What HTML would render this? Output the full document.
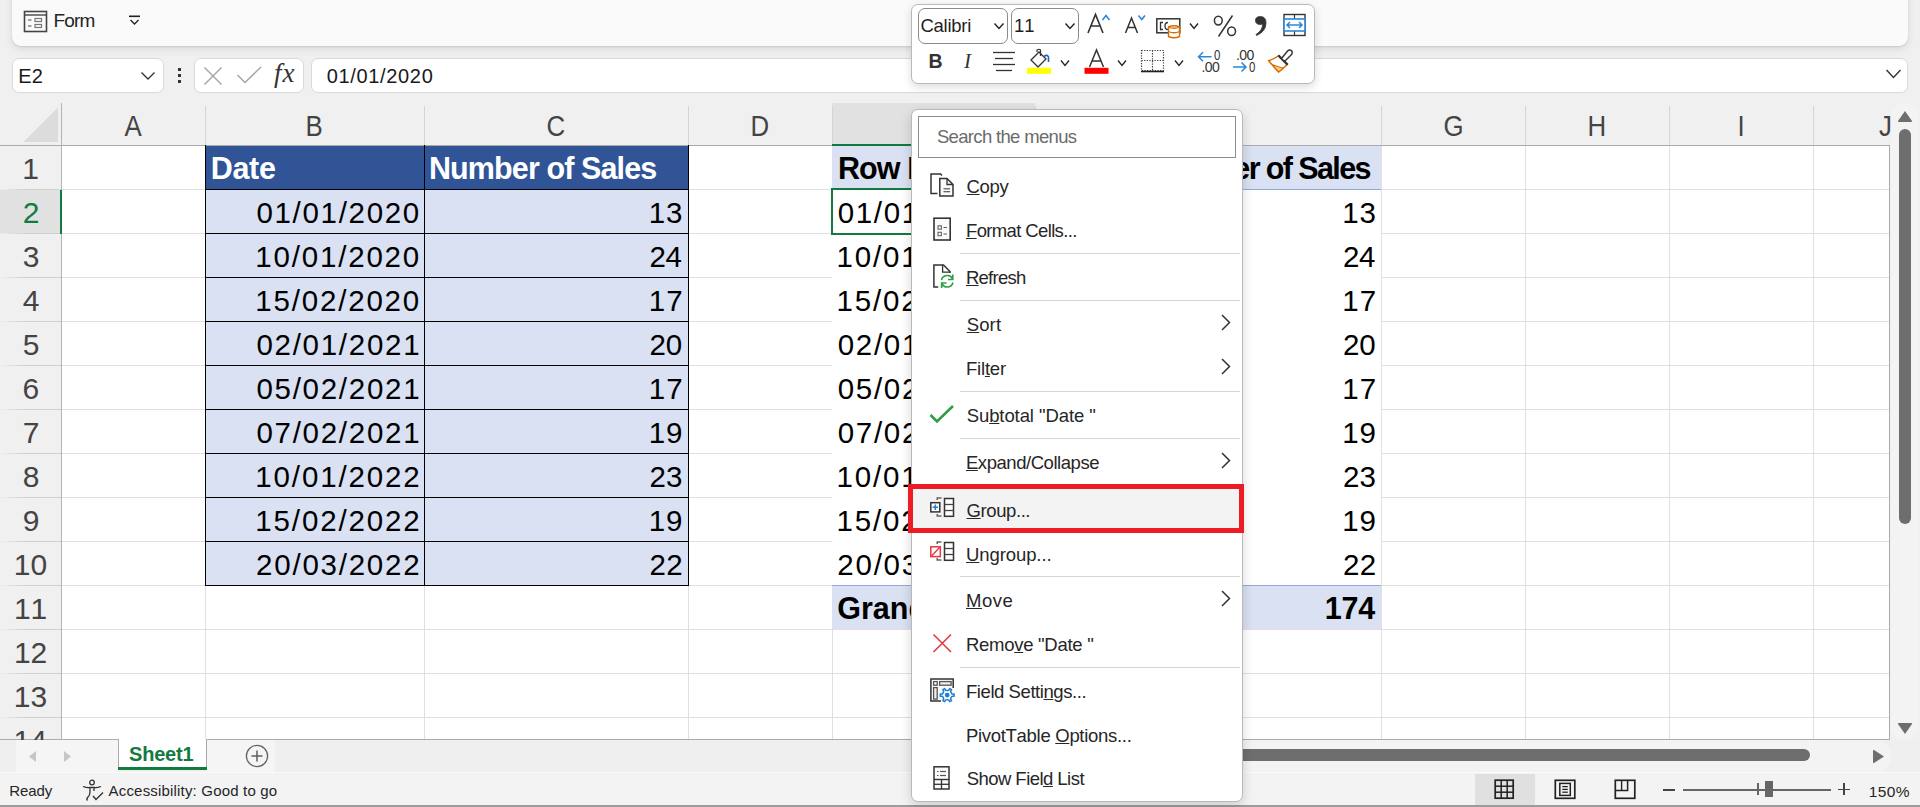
<!DOCTYPE html><html><head><meta charset='utf-8'><style>
html,body{margin:0;padding:0;}
body{width:1920px;height:807px;overflow:hidden;position:relative;background:#f0f0f0;font-family:"Liberation Sans",sans-serif;font-kerning:none;}
.a{position:absolute;}
.t{position:absolute;white-space:pre;font-family:"Liberation Sans",sans-serif;}
svg.a{overflow:visible;}
</style></head><body>
<div class=a style='left:12px;top:-20px;width:1896px;height:66px;background:#fafafa;border-radius:9px;box-shadow:0 1px 2px rgba(0,0,0,0.10),0 3px 8px rgba(0,0,0,0.09);'></div>
<svg class=a style='left:23px;top:10px' width=26 height=24 viewBox='0 0 26 24'>
<rect x='1.5' y='1.5' width='22' height='20' fill='none' stroke='#444' stroke-width='1.6'/>
<line x1='1.5' y1='5' x2='23.5' y2='5' stroke='#444' stroke-width='1.4'/>
<line x1='5' y1='10' x2='8.5' y2='10' stroke='#666' stroke-width='1.2'/>
<line x1='5' y1='16' x2='8.5' y2='16' stroke='#666' stroke-width='1.2'/>
<rect x='12' y='8.5' width='6.5' height='3' fill='none' stroke='#777' stroke-width='1.2'/>
<rect x='12' y='14.5' width='6.5' height='3' fill='none' stroke='#777' stroke-width='1.2'/>
</svg>
<div class=t style='left:53.44px;top:10.91px;font-size:19px;line-height:19px;color:#242424;letter-spacing:-0.839px;'>Form</div>
<svg class=a style='left:128px;top:15px' width=13 height=11 viewBox='0 0 13 11'>
<line x1='1' y1='1.3' x2='12' y2='1.3' stroke='#222' stroke-width='1.6'/>
<polyline points='2.5,5 6.5,9 10.5,5' fill='none' stroke='#222' stroke-width='1.3'/>
</svg>
<div class=a style='left:12px;top:58px;width:152px;height:35px;background:#fff;border:1px solid #d9d9d9;border-radius:7px;box-sizing:border-box;'></div>
<div class=t style='left:18.36px;top:66.07px;font-size:20px;line-height:20px;color:#1a1a1a;'>E2</div>
<svg class=a style='left:140px;top:70px' width=16 height=12 viewBox='0 0 16 12'>
<polyline points='1.5,2.5 8,9 14.5,2.5' fill='none' stroke='#333' stroke-width='1.4'/></svg>
<div class=a style='left:178px;top:68px;width:3px;height:3px;background:#333;'></div>
<div class=a style='left:178px;top:74px;width:3px;height:3px;background:#333;'></div>
<div class=a style='left:178px;top:80px;width:3px;height:3px;background:#333;'></div>
<div class=a style='left:194px;top:58px;width:110px;height:35px;background:#fff;border:1px solid #d9d9d9;border-radius:7px;box-sizing:border-box;'></div>
<svg class=a style='left:203px;top:66px' width=22 height=20 viewBox='0 0 22 20'>
<line x1='1.5' y1='1.5' x2='18.5' y2='18.5' stroke='#a6a6a6' stroke-width='1.5'/>
<line x1='18.5' y1='1.5' x2='1.5' y2='18.5' stroke='#a6a6a6' stroke-width='1.5'/></svg>
<svg class=a style='left:236px;top:65px' width=27 height=20 viewBox='0 0 27 20'>
<polyline points='1.5,10 9,17.5 25,2' fill='none' stroke='#a6a6a6' stroke-width='1.5'/></svg>
<div class=t style='left:274px;top:60px;font-size:27px;line-height:27px;color:#333;font-style:italic;font-family:"Liberation Serif",serif;letter-spacing:1px'>fx</div>
<div class=a style='left:311px;top:58px;width:1597px;height:35px;background:#fff;border:1px solid #d9d9d9;border-radius:7px;box-sizing:border-box;'></div>
<div class=t style='left:326.72px;top:65.87px;font-size:20px;line-height:20px;color:#1a1a1a;letter-spacing:0.663px;'>01/01/2020</div>
<svg class=a style='left:1885px;top:68px' width=17 height=12 viewBox='0 0 17 12'>
<polyline points='1.5,2 8.5,9.5 15.5,2' fill='none' stroke='#333' stroke-width='1.4'/></svg>
<div class=a style='left:832px;top:103px;width:203px;height:42px;background:#e1e1e1;'></div>
<div class=a style='left:205px;top:106px;width:1px;height:39px;background:#d5d5d5;'></div>
<div class=a style='left:424px;top:106px;width:1px;height:39px;background:#d5d5d5;'></div>
<div class=a style='left:688px;top:106px;width:1px;height:39px;background:#d5d5d5;'></div>
<div class=a style='left:832px;top:106px;width:1px;height:39px;background:#d5d5d5;'></div>
<div class=a style='left:1035px;top:106px;width:1px;height:39px;background:#d5d5d5;'></div>
<div class=a style='left:1381px;top:106px;width:1px;height:39px;background:#d5d5d5;'></div>
<div class=a style='left:1525px;top:106px;width:1px;height:39px;background:#d5d5d5;'></div>
<div class=a style='left:1669px;top:106px;width:1px;height:39px;background:#d5d5d5;'></div>
<div class=a style='left:1813px;top:106px;width:1px;height:39px;background:#d5d5d5;'></div>
<div class=a style='left:0px;top:145px;width:1889px;height:1px;background:#ababab;'></div>
<div class=a style='left:832px;top:144px;width:203px;height:2px;background:#137a3f;'></div>
<svg class=a style='left:23px;top:107px' width=36 height=36 viewBox='0 0 36 36'><polygon points='35,0.5 35,35 0.5,35' fill='#dcdcdc'/></svg>
<div class=t style='left:123.00px;top:110.60px;font-size:30px;line-height:30px;color:#444444;transform:scaleX(0.86);transform-origin:10.00px 0;'>A</div>
<div class=t style='left:304.06px;top:110.60px;font-size:30px;line-height:30px;color:#444444;transform:scaleX(0.86);transform-origin:10.44px 0;'>B</div>
<div class=t style='left:544.98px;top:110.60px;font-size:30px;line-height:30px;color:#444444;transform:scaleX(0.86);transform-origin:11.02px 0;'>C</div>
<div class=t style='left:748.65px;top:110.60px;font-size:30px;line-height:30px;color:#444444;transform:scaleX(0.86);transform-origin:11.35px 0;'>D</div>
<div class=t style='left:922.91px;top:110.60px;font-size:30px;line-height:30px;color:#444444;transform:scaleX(0.86);transform-origin:10.59px 0;'>E</div>
<div class=t style='left:1198.21px;top:110.60px;font-size:30px;line-height:30px;color:#444444;transform:scaleX(0.86);transform-origin:9.79px 0;'>F</div>
<div class=t style='left:1441.70px;top:110.60px;font-size:30px;line-height:30px;color:#444444;transform:scaleX(0.86);transform-origin:11.30px 0;'>G</div>
<div class=t style='left:1586.16px;top:110.60px;font-size:30px;line-height:30px;color:#444444;transform:scaleX(0.86);transform-origin:10.84px 0;'>H</div>
<div class=t style='left:1736.83px;top:110.60px;font-size:30px;line-height:30px;color:#444444;transform:scaleX(0.86);transform-origin:4.17px 0;'>I</div>
<div class=t style='left:1877.88px;top:110.60px;font-size:30px;line-height:30px;color:#444444;transform:scaleX(0.86);transform-origin:6.62px 0;'>J</div>
<div class=a style='left:62px;top:146px;width:1827px;height:593px;background:#fff;'></div>
<div class=a style='left:205px;top:146px;width:1px;height:593px;background:#e0e0e0;'></div>
<div class=a style='left:424px;top:146px;width:1px;height:593px;background:#e0e0e0;'></div>
<div class=a style='left:688px;top:146px;width:1px;height:593px;background:#e0e0e0;'></div>
<div class=a style='left:832px;top:146px;width:1px;height:593px;background:#e0e0e0;'></div>
<div class=a style='left:1035px;top:146px;width:1px;height:593px;background:#e0e0e0;'></div>
<div class=a style='left:1381px;top:146px;width:1px;height:593px;background:#e0e0e0;'></div>
<div class=a style='left:1525px;top:146px;width:1px;height:593px;background:#e0e0e0;'></div>
<div class=a style='left:1669px;top:146px;width:1px;height:593px;background:#e0e0e0;'></div>
<div class=a style='left:1813px;top:146px;width:1px;height:593px;background:#e0e0e0;'></div>
<div class=a style='left:62px;top:189px;width:1827px;height:1px;background:#e0e0e0;'></div>
<div class=a style='left:62px;top:233px;width:1827px;height:1px;background:#e0e0e0;'></div>
<div class=a style='left:62px;top:277px;width:1827px;height:1px;background:#e0e0e0;'></div>
<div class=a style='left:62px;top:321px;width:1827px;height:1px;background:#e0e0e0;'></div>
<div class=a style='left:62px;top:365px;width:1827px;height:1px;background:#e0e0e0;'></div>
<div class=a style='left:62px;top:409px;width:1827px;height:1px;background:#e0e0e0;'></div>
<div class=a style='left:62px;top:453px;width:1827px;height:1px;background:#e0e0e0;'></div>
<div class=a style='left:62px;top:497px;width:1827px;height:1px;background:#e0e0e0;'></div>
<div class=a style='left:62px;top:541px;width:1827px;height:1px;background:#e0e0e0;'></div>
<div class=a style='left:62px;top:585px;width:1827px;height:1px;background:#e0e0e0;'></div>
<div class=a style='left:62px;top:629px;width:1827px;height:1px;background:#e0e0e0;'></div>
<div class=a style='left:62px;top:673px;width:1827px;height:1px;background:#e0e0e0;'></div>
<div class=a style='left:62px;top:717px;width:1827px;height:1px;background:#e0e0e0;'></div>
<div class=a style='left:1889px;top:145px;width:1px;height:595px;background:#ababab;'></div>
<div class=a style='left:0px;top:739px;width:1890px;height:1px;background:#ababab;'></div>
<div class=a style='left:61px;top:103px;width:1px;height:637px;background:#b4b4b4;'></div>
<div class=a style='left:0px;top:190px;width:61px;height:43px;background:#e1e1e1;'></div>
<div class=a style='left:0;top:189px;width:61px;height:1px;background:linear-gradient(90deg,rgba(208,208,208,0),#d0d0d0 40%)'></div>
<div class=a style='left:0;top:233px;width:61px;height:1px;background:linear-gradient(90deg,rgba(208,208,208,0),#d0d0d0 40%)'></div>
<div class=a style='left:0;top:277px;width:61px;height:1px;background:linear-gradient(90deg,rgba(208,208,208,0),#d0d0d0 40%)'></div>
<div class=a style='left:0;top:321px;width:61px;height:1px;background:linear-gradient(90deg,rgba(208,208,208,0),#d0d0d0 40%)'></div>
<div class=a style='left:0;top:365px;width:61px;height:1px;background:linear-gradient(90deg,rgba(208,208,208,0),#d0d0d0 40%)'></div>
<div class=a style='left:0;top:409px;width:61px;height:1px;background:linear-gradient(90deg,rgba(208,208,208,0),#d0d0d0 40%)'></div>
<div class=a style='left:0;top:453px;width:61px;height:1px;background:linear-gradient(90deg,rgba(208,208,208,0),#d0d0d0 40%)'></div>
<div class=a style='left:0;top:497px;width:61px;height:1px;background:linear-gradient(90deg,rgba(208,208,208,0),#d0d0d0 40%)'></div>
<div class=a style='left:0;top:541px;width:61px;height:1px;background:linear-gradient(90deg,rgba(208,208,208,0),#d0d0d0 40%)'></div>
<div class=a style='left:0;top:585px;width:61px;height:1px;background:linear-gradient(90deg,rgba(208,208,208,0),#d0d0d0 40%)'></div>
<div class=a style='left:0;top:629px;width:61px;height:1px;background:linear-gradient(90deg,rgba(208,208,208,0),#d0d0d0 40%)'></div>
<div class=a style='left:0;top:673px;width:61px;height:1px;background:linear-gradient(90deg,rgba(208,208,208,0),#d0d0d0 40%)'></div>
<div class=a style='left:0;top:717px;width:61px;height:1px;background:linear-gradient(90deg,rgba(208,208,208,0),#d0d0d0 40%)'></div>
<div class=t style='left:22.25px;top:153.60px;font-size:30px;line-height:30px;color:#444444;'>1</div>
<div class=t style='left:22.66px;top:197.60px;font-size:30px;line-height:30px;color:#107c41;'>2</div>
<div class=t style='left:22.75px;top:241.60px;font-size:30px;line-height:30px;color:#444444;'>3</div>
<div class=t style='left:22.75px;top:285.60px;font-size:30px;line-height:30px;color:#444444;'>4</div>
<div class=t style='left:22.69px;top:329.60px;font-size:30px;line-height:30px;color:#444444;'>5</div>
<div class=t style='left:22.56px;top:373.60px;font-size:30px;line-height:30px;color:#444444;'>6</div>
<div class=t style='left:22.64px;top:417.60px;font-size:30px;line-height:30px;color:#444444;'>7</div>
<div class=t style='left:22.66px;top:461.60px;font-size:30px;line-height:30px;color:#444444;'>8</div>
<div class=t style='left:22.67px;top:505.60px;font-size:30px;line-height:30px;color:#444444;'>9</div>
<div class=t style='left:13.76px;top:549.60px;font-size:30px;line-height:30px;color:#444444;'>10</div>
<div class=t style='left:13.91px;top:593.60px;font-size:30px;line-height:30px;color:#444444;'>11</div>
<div class=t style='left:13.93px;top:637.60px;font-size:30px;line-height:30px;color:#444444;'>12</div>
<div class=t style='left:13.83px;top:681.60px;font-size:30px;line-height:30px;color:#444444;'>13</div>
<div class=t style='left:13.61px;top:725.60px;font-size:30px;line-height:30px;color:#444444;'>14</div>
<div class=a style='left:60px;top:190px;width:2px;height:44px;background:#137a3f;'></div>
<div class=a style='left:0px;top:740px;width:1920px;height:67px;background:#f0f0f0;'></div>
<div class=a style='left:205px;top:146px;width:483px;height:43px;background:#305496;'></div>
<div class=a style='left:205px;top:189px;width:483px;height:396px;background:#d9e1f2;'></div>
<div class=a style='left:205px;top:145px;width:1px;height:441px;background:#000;'></div>
<div class=a style='left:424px;top:145px;width:1px;height:441px;background:#000;'></div>
<div class=a style='left:688px;top:145px;width:1px;height:441px;background:#000;'></div>
<div class=a style='left:205px;top:189px;width:484px;height:1px;background:#000;'></div>
<div class=a style='left:205px;top:233px;width:484px;height:1px;background:#000;'></div>
<div class=a style='left:205px;top:277px;width:484px;height:1px;background:#000;'></div>
<div class=a style='left:205px;top:321px;width:484px;height:1px;background:#000;'></div>
<div class=a style='left:205px;top:365px;width:484px;height:1px;background:#000;'></div>
<div class=a style='left:205px;top:409px;width:484px;height:1px;background:#000;'></div>
<div class=a style='left:205px;top:453px;width:484px;height:1px;background:#000;'></div>
<div class=a style='left:205px;top:497px;width:484px;height:1px;background:#000;'></div>
<div class=a style='left:205px;top:541px;width:484px;height:1px;background:#000;'></div>
<div class=a style='left:205px;top:585px;width:484px;height:1px;background:#000;'></div>
<div class=t style='left:210.76px;top:153.18px;font-size:30.5px;line-height:30.5px;color:#fff;font-weight:700;letter-spacing:-0.308px;'>Date</div>
<div class=t style='left:428.96px;top:153.18px;font-size:30.5px;line-height:30.5px;color:#fff;font-weight:700;letter-spacing:-0.885px;'>Number of Sales</div>
<div class=t style='left:256.45px;top:198.02px;font-size:29.5px;line-height:29.5px;color:#000;letter-spacing:1.685px;'>01/01/2020</div>
<div class=t style='left:648.75px;top:198.02px;font-size:29.5px;line-height:29.5px;color:#000;letter-spacing:0.830px;'>13</div>
<div class=t style='left:255.35px;top:242.02px;font-size:29.5px;line-height:29.5px;color:#000;letter-spacing:1.806px;'>10/01/2020</div>
<div class=t style='left:649.52px;top:242.02px;font-size:29.5px;line-height:29.5px;color:#000;letter-spacing:-0.365px;'>24</div>
<div class=t style='left:255.35px;top:286.02px;font-size:29.5px;line-height:29.5px;color:#000;letter-spacing:1.806px;'>15/02/2020</div>
<div class=t style='left:648.75px;top:286.02px;font-size:29.5px;line-height:29.5px;color:#000;letter-spacing:1.018px;'>17</div>
<div class=t style='left:256.45px;top:330.02px;font-size:29.5px;line-height:29.5px;color:#000;letter-spacing:1.717px;'>02/01/2021</div>
<div class=t style='left:649.52px;top:330.02px;font-size:29.5px;line-height:29.5px;color:#000;letter-spacing:-0.077px;'>20</div>
<div class=t style='left:256.45px;top:374.02px;font-size:29.5px;line-height:29.5px;color:#000;letter-spacing:1.717px;'>05/02/2021</div>
<div class=t style='left:648.75px;top:374.02px;font-size:29.5px;line-height:29.5px;color:#000;letter-spacing:1.018px;'>17</div>
<div class=t style='left:256.45px;top:418.02px;font-size:29.5px;line-height:29.5px;color:#000;letter-spacing:1.717px;'>07/02/2021</div>
<div class=t style='left:648.75px;top:418.02px;font-size:29.5px;line-height:29.5px;color:#000;letter-spacing:0.931px;'>19</div>
<div class=t style='left:255.35px;top:462.02px;font-size:29.5px;line-height:29.5px;color:#000;letter-spacing:1.843px;'>10/01/2022</div>
<div class=t style='left:649.52px;top:462.02px;font-size:29.5px;line-height:29.5px;color:#000;letter-spacing:0.067px;'>23</div>
<div class=t style='left:255.35px;top:506.02px;font-size:29.5px;line-height:29.5px;color:#000;letter-spacing:1.843px;'>15/02/2022</div>
<div class=t style='left:648.75px;top:506.02px;font-size:29.5px;line-height:29.5px;color:#000;letter-spacing:0.931px;'>19</div>
<div class=t style='left:256.12px;top:550.02px;font-size:29.5px;line-height:29.5px;color:#000;letter-spacing:1.758px;'>20/03/2022</div>
<div class=t style='left:649.52px;top:550.02px;font-size:29.5px;line-height:29.5px;color:#000;letter-spacing:0.254px;'>22</div>
<div class=a style='left:832px;top:146px;width:549px;height:483px;background:#fff;'></div>
<div class=a style='left:832px;top:146px;width:549px;height:43px;background:#d9e1f2;'></div>
<div class=a style='left:832px;top:189px;width:549px;height:1px;background:#8ea9db;'></div>
<div class=a style='left:832px;top:585px;width:549px;height:1px;background:#8ea9db;'></div>
<div class=a style='left:832px;top:586px;width:549px;height:43px;background:#d9e1f2;'></div>
<div class=a style='left:832px;top:629px;width:549px;height:1px;background:#e0e0e0;'></div>
<div class=t style='left:837.96px;top:153.18px;font-size:30.5px;line-height:30.5px;color:#000;font-weight:700;letter-spacing:-0.900px;'>Row Labels</div>
<div class=t style='left:1052.96px;top:153.18px;font-size:30.5px;line-height:30.5px;color:#000;font-weight:700;letter-spacing:-1.620px;'>Sum of Number of Sales</div>
<div class=t style='left:837.65px;top:198.02px;font-size:29.5px;line-height:29.5px;color:#000;letter-spacing:1.685px;'>01/01/2020</div>
<div class=t style='left:1342.25px;top:198.02px;font-size:29.5px;line-height:29.5px;color:#000;letter-spacing:0.830px;'>13</div>
<div class=t style='left:836.55px;top:242.02px;font-size:29.5px;line-height:29.5px;color:#000;letter-spacing:1.806px;'>10/01/2020</div>
<div class=t style='left:1343.02px;top:242.02px;font-size:29.5px;line-height:29.5px;color:#000;letter-spacing:-0.365px;'>24</div>
<div class=t style='left:836.55px;top:286.02px;font-size:29.5px;line-height:29.5px;color:#000;letter-spacing:1.806px;'>15/02/2020</div>
<div class=t style='left:1342.25px;top:286.02px;font-size:29.5px;line-height:29.5px;color:#000;letter-spacing:1.018px;'>17</div>
<div class=t style='left:837.65px;top:330.02px;font-size:29.5px;line-height:29.5px;color:#000;letter-spacing:1.717px;'>02/01/2021</div>
<div class=t style='left:1343.02px;top:330.02px;font-size:29.5px;line-height:29.5px;color:#000;letter-spacing:-0.077px;'>20</div>
<div class=t style='left:837.65px;top:374.02px;font-size:29.5px;line-height:29.5px;color:#000;letter-spacing:1.717px;'>05/02/2021</div>
<div class=t style='left:1342.25px;top:374.02px;font-size:29.5px;line-height:29.5px;color:#000;letter-spacing:1.018px;'>17</div>
<div class=t style='left:837.65px;top:418.02px;font-size:29.5px;line-height:29.5px;color:#000;letter-spacing:1.717px;'>07/02/2021</div>
<div class=t style='left:1342.25px;top:418.02px;font-size:29.5px;line-height:29.5px;color:#000;letter-spacing:0.931px;'>19</div>
<div class=t style='left:836.55px;top:462.02px;font-size:29.5px;line-height:29.5px;color:#000;letter-spacing:1.843px;'>10/01/2022</div>
<div class=t style='left:1343.02px;top:462.02px;font-size:29.5px;line-height:29.5px;color:#000;letter-spacing:0.067px;'>23</div>
<div class=t style='left:836.55px;top:506.02px;font-size:29.5px;line-height:29.5px;color:#000;letter-spacing:1.843px;'>15/02/2022</div>
<div class=t style='left:1342.25px;top:506.02px;font-size:29.5px;line-height:29.5px;color:#000;letter-spacing:0.931px;'>19</div>
<div class=t style='left:837.32px;top:550.02px;font-size:29.5px;line-height:29.5px;color:#000;letter-spacing:1.758px;'>20/03/2022</div>
<div class=t style='left:1343.02px;top:550.02px;font-size:29.5px;line-height:29.5px;color:#000;letter-spacing:0.254px;'>22</div>
<div class=t style='left:837.25px;top:593.18px;font-size:30.5px;line-height:30.5px;color:#000;font-weight:700;'>Grand Total</div>
<div class=t style='left:1324.78px;top:593.18px;font-size:30.5px;line-height:30.5px;color:#000;font-weight:700;letter-spacing:-0.251px;'>174</div>
<div class=a style='left:831px;top:188px;width:210px;height:47px;box-sizing:border-box;border:2px solid #137a3f'></div>
<div class=a style='left:1891px;top:103px;width:28px;height:637px;background:#f3f3f3;border-radius:14px;'></div>
<svg class=a style='left:1897px;top:110px' width=16 height=13 viewBox='0 0 16 13'><path d='M8 1 L15 11 Q15.5 12 14 12 L2 12 Q0.5 12 1 11 Z' fill='#6e6e6e'/></svg>
<div class=a style='left:1899px;top:129px;width:12px;height:395px;background:#6e6e6e;border-radius:6px;'></div>
<svg class=a style='left:1897px;top:722px' width=16 height=13 viewBox='0 0 16 13'><path d='M8 12 L15 2 Q15.5 1 14 1 L2 1 Q0.5 1 1 2 Z' fill='#6e6e6e'/></svg>
<div class=a style='left:0px;top:740px;width:1920px;height:33px;background:#efefef;'></div>
<div class=a style='left:16px;top:740px;width:102px;height:33px;background:#f5f5f5;'></div>
<div class=a style='left:206px;top:740px;width:69px;height:33px;background:#f5f5f5;'></div>
<div class=a style='left:1243px;top:740px;width:648px;height:33px;background:#f3f3f3;border-radius:0 16px 16px 0;'></div>
<div class=a style='left:1180px;top:749px;width:630px;height:12px;background:#6e6e6e;border-radius:6px;'></div>
<svg class=a style='left:1872px;top:749px' width=13 height=15 viewBox='0 0 13 15'><path d='M12 7.5 L2 14 Q1 14.5 1 13 L1 2 Q1 0.5 2 1 Z' fill='#6e6e6e'/></svg>
<svg class=a style='left:28px;top:750px' width=9 height=13 viewBox='0 0 9 13'><path d='M1 6.5 L8 1 L8 12 Z' fill='#c6c6c6'/></svg>
<svg class=a style='left:63px;top:750px' width=9 height=13 viewBox='0 0 9 13'><path d='M8 6.5 L1 1 L1 12 Z' fill='#c6c6c6'/></svg>
<div class=a style='left:118px;top:739px;width:89px;height:31px;background:#fff;border-left:1px solid #ababab;border-right:1px solid #ababab;box-sizing:border-box;'></div>
<div class=a style='left:118px;top:767px;width:89px;height:3px;background:#137a3f;'></div>
<div class=t style='left:129.12px;top:743.67px;font-size:20px;line-height:20px;color:#137a3f;font-weight:700;letter-spacing:-0.231px;'>Sheet1</div>
<svg class=a style='left:245px;top:744px' width=24 height=24 viewBox='0 0 24 24'><circle cx='12' cy='12' r='10.6' fill='none' stroke='#666' stroke-width='1.3'/><line x1='12' y1='6.5' x2='12' y2='17.5' stroke='#555' stroke-width='1.4'/><line x1='6.5' y1='12' x2='17.5' y2='12' stroke='#555' stroke-width='1.4'/></svg>
<div class=a style='left:0px;top:773px;width:1920px;height:34px;background:#f3f3f3;'></div>
<div class=a style='left:0px;top:772px;width:1920px;height:1px;background:#fafafa;'></div>
<div class=a style='left:0px;top:805px;width:1920px;height:2px;background:#9c9c9c;'></div>
<div class=t style='left:9.37px;top:782.90px;font-size:15px;line-height:15px;color:#262626;letter-spacing:-0.100px;'>Ready</div>
<svg class=a style='left:81px;top:779px' width=24 height=23 viewBox='0 0 24 23'>
<circle cx='11' cy='3.5' r='2.3' fill='none' stroke='#333' stroke-width='1.3'/>
<path d='M2 7.5 Q6 9 9 8.5 L13 8.5 Q16 9 20 7.5' fill='none' stroke='#333' stroke-width='1.3'/>
<path d='M9 8.5 L9 13 Q9 16 7 18 Q5 20 6.5 21.5' fill='none' stroke='#333' stroke-width='1.3'/>
<path d='M13 8.5 L13 12' fill='none' stroke='#333' stroke-width='1.3'/>
<polyline points='12,17 15,20.5 22,13.5' fill='none' stroke='#333' stroke-width='1.4'/>
</svg>
<div class=t style='left:108.57px;top:782.90px;font-size:15px;line-height:15px;color:#262626;letter-spacing:0.180px;'>Accessibility: Good to go</div>
<div class=a style='left:1475px;top:774px;width:60px;height:31px;background:#e0e0e0;'></div>
<svg class=a style='left:1494px;top:779px' width=21 height=21 viewBox='0 0 21 21'>
<rect x='1.2' y='1.2' width='18' height='18' fill='none' stroke='#222' stroke-width='1.7'/>
<line x1='7.2' y1='1' x2='7.2' y2='19.5' stroke='#222' stroke-width='1.5'/><line x1='13.2' y1='1' x2='13.2' y2='19.5' stroke='#222' stroke-width='1.5'/>
<line x1='1' y1='7.2' x2='19.5' y2='7.2' stroke='#222' stroke-width='1.5'/><line x1='1' y1='13.2' x2='19.5' y2='13.2' stroke='#222' stroke-width='1.5'/>
</svg>
<svg class=a style='left:1554px;top:779px' width=22 height=21 viewBox='0 0 22 21'>
<rect x='1.3' y='1.3' width='19.5' height='18' fill='none' stroke='#222' stroke-width='1.7'/>
<rect x='5.8' y='4.4' width='10.5' height='12' fill='none' stroke='#222' stroke-width='1.5'/>
<line x1='8.3' y1='7.6' x2='13.8' y2='7.6' stroke='#222' stroke-width='1.3'/><line x1='8.3' y1='10.4' x2='13.8' y2='10.4' stroke='#222' stroke-width='1.3'/><line x1='8.3' y1='13.2' x2='13.8' y2='13.2' stroke='#222' stroke-width='1.3'/>
</svg>
<svg class=a style='left:1614px;top:779px' width=22 height=21 viewBox='0 0 22 21'>
<rect x='1.3' y='1.3' width='19.5' height='18' fill='none' stroke='#222' stroke-width='1.7'/>
<polyline points='1.3,11.5 13.6,11.5 13.6,1.3' fill='none' stroke='#222' stroke-width='1.5'/>
<line x1='7.6' y1='1.3' x2='7.6' y2='11.5' stroke='#222' stroke-width='1.4'/>
</svg>
<div class=a style='left:1663px;top:789px;width:12px;height:1.5px;background:#444;'></div>
<div class=a style='left:1683px;top:788.5px;width:148px;height:2px;background:#666;'></div>
<div class=a style='left:1757px;top:783px;width:1.5px;height:12px;background:#666;'></div>
<div class=a style='left:1765px;top:781px;width:8px;height:16px;background:#666;'></div>
<div class=a style='left:1838px;top:788.5px;width:12px;height:1.5px;background:#444;'></div>
<div class=a style='left:1843.2px;top:783px;width:1.5px;height:12px;background:#444;'></div>
<div class=t style='left:1868.82px;top:783.88px;font-size:15.5px;line-height:15.5px;color:#262626;letter-spacing:0.363px;'>150%</div>
<div class=a style='left:911px;top:4px;width:404px;height:80px;box-sizing:border-box;background:#fff;border:1.5px solid #b9b9b9;border-radius:7px;box-shadow:0 3px 10px rgba(0,0,0,0.14)'></div>
<div class=a style='left:918px;top:8px;width:90px;height:36px;background:#fff;border:1px solid #8a8a8a;border-radius:7px;box-sizing:border-box;'></div>
<div class=a style='left:1011px;top:8px;width:68px;height:36px;background:#fff;border:1px solid #8a8a8a;border-radius:7px;box-sizing:border-box;'></div>
<div class=t style='left:920.56px;top:16.94px;font-size:18.5px;line-height:18.5px;color:#1f1f1f;letter-spacing:-0.290px;'>Calibri</div>
<div class=t style='left:1014.09px;top:16.94px;font-size:18.5px;line-height:18.5px;color:#1f1f1f;'>11</div>
<svg class=a style='left:0;top:0' width=1920 height=807><polyline points='994.5,23.5 999.0,28.5 1003.5,23.5' fill='none' stroke='#222' stroke-width='1.4'/><polyline points='1065.5,23.5 1070.0,28.5 1074.5,23.5' fill='none' stroke='#222' stroke-width='1.4'/><path d='M1088 33 L1095.5 14.5 L1103 33 M1091 26 L1100 26' fill='none' stroke='#333' stroke-width='1.6'/><polyline points='1102.5,20 1106,15.5 1109.5,20' fill='none' stroke='#2b88d8' stroke-width='1.6'/><path d='M1125.5 33 L1131.5 18 L1137.5 33 M1128 27.5 L1135 27.5' fill='none' stroke='#333' stroke-width='1.5'/><polyline points='1138.5,15.5 1141.8,19.5 1145,15.5' fill='none' stroke='#2b88d8' stroke-width='1.6'/><rect x='1156.8' y='18.8' width='23' height='14' fill='none' stroke='#333' stroke-width='1.5'/><path d='M1163 22.5 L1160.5 22.5 L1160.5 29.5 L1163 29.5 M1168 22.5 Q1165 22.5 1165 26 Q1165 29.5 1168 29.5' fill='none' stroke='#333' stroke-width='1.3'/><path d='M1168.5 27 L1168.5 36.5 Q1174 39 1179.5 36.5 L1179.5 27 Q1174 24.5 1168.5 27 Z' fill='#fff' stroke='#d86b00' stroke-width='1.4'/><path d='M1168.5 27 Q1174 29.5 1179.5 27 M1168.5 31.5 Q1174 34 1179.5 31.5' fill='none' stroke='#d86b00' stroke-width='1.3'/><polyline points='1190,23.5 1194.0,28.5 1198,23.5' fill='none' stroke='#222' stroke-width='1.4'/><ellipse cx='1218.3' cy='20.6' rx='3.9' ry='4.3' fill='none' stroke='#333' stroke-width='1.5'/><ellipse cx='1231.6' cy='31.3' rx='3.9' ry='4.3' fill='none' stroke='#333' stroke-width='1.5'/><line x1='1232.5' y1='15.5' x2='1218.5' y2='36.5' stroke='#333' stroke-width='1.5'/><path d='M1260.5 24.5 Q1255.5 24.5 1255.5 20.5 Q1255.5 16.5 1260.5 16.5 Q1266 16.5 1266 23 Q1266 31.5 1256.5 35.5 L1256 34.5 Q1262.5 30.5 1262.8 24 Z' fill='#333' stroke='#333' stroke-width='0.8'/><rect x='1284' y='14.5' width='21' height='21' fill='none' stroke='#333' stroke-width='1.4'/><line x1='1294.5' y1='14.5' x2='1294.5' y2='35.5' stroke='#333' stroke-width='1.2'/><rect x='1284' y='19' width='21' height='12' fill='#fff' stroke='#2b88d8' stroke-width='1.6'/><path d='M1287 25 L1302 25 M1290 22 L1287 25 L1290 28 M1299 22 L1302 25 L1299 28' fill='none' stroke='#2b88d8' stroke-width='1.5'/><text x='928.5' y='68' font-family='Liberation Sans' font-weight='700' font-size='19.5' fill='#333'>B</text><text x='964' y='68' font-family='Liberation Serif' font-style='italic' font-size='21' fill='#333'>I</text><line x1='993' y1='52.5' x2='1015' y2='52.5' stroke='#333' stroke-width='1.3'/><line x1='995' y1='58.5' x2='1013' y2='58.5' stroke='#333' stroke-width='1.3'/><line x1='993' y1='64.5' x2='1015' y2='64.5' stroke='#333' stroke-width='1.3'/><line x1='996' y1='70.5' x2='1012' y2='70.5' stroke='#333' stroke-width='1.3'/><path d='M1031 60 L1039 52 L1046 59 L1038 67 Z' fill='#fafafa' stroke='#333' stroke-width='1.3'/><path d='M1037 52 L1037 50 Q1039 48.5 1040.5 50 L1040.5 56' fill='none' stroke='#333' stroke-width='1.2'/><path d='M1044 56.5 Q1047 54 1048.5 57 L1048.5 62' fill='none' stroke='#1f5fbf' stroke-width='1.6'/><rect x='1027' y='67.8' width='24' height='6' fill='#ffff00'/><polyline points='1061,60.5 1065.0,65.5 1069,60.5' fill='none' stroke='#222' stroke-width='1.3'/><path d='M1089.5 67 L1096.5 50 L1103.5 67 M1092 61 L1101 61' fill='none' stroke='#333' stroke-width='1.5'/><rect x='1084.5' y='67.8' width='24' height='6' fill='#ff0000'/><polyline points='1118,60.5 1122.0,65.5 1126,60.5' fill='none' stroke='#222' stroke-width='1.3'/><rect x='1141.5' y='50.5' width='22' height='20' fill='none' stroke='#444' stroke-width='1.2' stroke-dasharray='1.3,1.3'/><line x1='1152.5' y1='50.5' x2='1152.5' y2='70' stroke='#444' stroke-width='1.2' stroke-dasharray='1.3,1.3'/><line x1='1141.5' y1='60.5' x2='1163.5' y2='60.5' stroke='#444' stroke-width='1.2' stroke-dasharray='1.3,1.3'/><line x1='1141' y1='71.5' x2='1164' y2='71.5' stroke='#222' stroke-width='1.6'/><polyline points='1175,60.5 1179.0,65.5 1183,60.5' fill='none' stroke='#222' stroke-width='1.3'/><text x='1214' y='60.2' font-family='Liberation Sans' font-size='14' fill='#333' transform='translate(1214 0) scale(0.82 1) translate(-1214 0)'>0</text><text x='1201.5' y='72.2' font-family='Liberation Sans' font-size='14' fill='#333' letter-spacing='-0.6'>.00</text><path d='M1198.5 56.8 L1211.5 56.8 M1203 52.3 L1198.5 56.8 L1203 61.3' fill='none' stroke='#2b88d8' stroke-width='1.5'/><text x='1236' y='60.2' font-family='Liberation Sans' font-size='14' fill='#333' letter-spacing='-0.6'>.00</text><text x='1249' y='72.2' font-family='Liberation Sans' font-size='14' fill='#333' transform='translate(1249 0) scale(0.82 1) translate(-1249 0)'>0</text><path d='M1233 67 L1246 67 M1241.5 62.5 L1246 67 L1241.5 71.5' fill='none' stroke='#2b88d8' stroke-width='1.5'/><path d='M1268.5 60.8 Q1274 59 1278.2 56 L1287 64.8 Q1283 68.5 1278.6 72 Z' fill='#fff' stroke='#d86b00' stroke-width='1.5' stroke-linejoin='round'/><path d='M1272.5 64.8 L1283.3 68.3 L1278.6 72 Z' fill='#fbd38c' stroke='#d86b00' stroke-width='1.2' stroke-linejoin='round'/><path d='M1278.3 55.2 L1287.8 64.7' stroke='#333' stroke-width='2.2'/><path d='M1281.5 58.5 L1284.5 61.5 L1291.8 54.2 Q1293 51.5 1290.8 50.2 Q1288.8 49.5 1287.6 51 Z' fill='#fff' stroke='#333' stroke-width='1.4' stroke-linejoin='round'/></svg>
<div class=a style='left:911px;top:109px;width:332px;height:693px;box-sizing:border-box;background:#fff;border:1.5px solid #b9b9b9;border-radius:7px;box-shadow:0 4px 12px rgba(0,0,0,0.16)'></div>
<div class=a style='left:918px;top:116px;width:318px;height:42px;background:#fff;border:1px solid #8c8c8c;box-sizing:border-box;'></div>
<div class=t style='left:936.96px;top:127.54px;font-size:18.5px;line-height:18.5px;color:#6b6b6b;letter-spacing:-0.669px;'>Search the menus</div>
<div class=a style='left:908px;top:484px;width:336px;height:49px;background:#f3f3f3;border:5px solid #ed1c24;box-sizing:border-box;'></div>
<div class=t style='left:966.56px;top:177.94px;font-size:18.5px;line-height:18.5px;color:#262626;letter-spacing:-0.371px;'><u>C</u>opy</div>
<div class=t style='left:965.98px;top:222.04px;font-size:18.5px;line-height:18.5px;color:#262626;letter-spacing:-0.633px;'><u>F</u>ormat Cells...</div>
<div class=t style='left:965.98px;top:268.94px;font-size:18.5px;line-height:18.5px;color:#262626;letter-spacing:-0.760px;'><u>R</u>efresh</div>
<div class=t style='left:966.66px;top:316.04px;font-size:18.5px;line-height:18.5px;color:#262626;letter-spacing:0.149px;'><u>S</u>ort</div>
<div class=t style='left:965.98px;top:360.04px;font-size:18.5px;line-height:18.5px;color:#262626;letter-spacing:-0.197px;'>Fil<u>t</u>er</div>
<div class=t style='left:966.66px;top:407.24px;font-size:18.5px;line-height:18.5px;color:#262626;letter-spacing:-0.083px;'>Su<u>b</u>total &quot;Date &quot;</div>
<div class=t style='left:965.98px;top:454.24px;font-size:18.5px;line-height:18.5px;color:#262626;letter-spacing:-0.452px;'><u>E</u>xpand/Collapse</div>
<div class=t style='left:966.57px;top:501.74px;font-size:18.5px;line-height:18.5px;color:#262626;letter-spacing:-0.417px;'><u>G</u>roup...</div>
<div class=t style='left:966.07px;top:545.74px;font-size:18.5px;line-height:18.5px;color:#262626;letter-spacing:-0.096px;'><u>U</u>ngroup...</div>
<div class=t style='left:965.98px;top:592.04px;font-size:18.5px;line-height:18.5px;color:#262626;letter-spacing:0.534px;'><u>M</u>ove</div>
<div class=t style='left:965.98px;top:636.24px;font-size:18.5px;line-height:18.5px;color:#262626;letter-spacing:-0.275px;'>Remo<u>v</u>e &quot;Date &quot;</div>
<div class=t style='left:965.98px;top:682.94px;font-size:18.5px;line-height:18.5px;color:#262626;letter-spacing:-0.431px;'>Field Setti<u>n</u>gs...</div>
<div class=t style='left:965.98px;top:726.74px;font-size:18.5px;line-height:18.5px;color:#262626;letter-spacing:-0.296px;'>PivotTable <u>O</u>ptions...</div>
<div class=t style='left:966.66px;top:770.44px;font-size:18.5px;line-height:18.5px;color:#262626;letter-spacing:-0.541px;'>Show Fiel<u>d</u> List</div>
<div class=a style='left:960px;top:253px;width:280px;height:1px;background:#d6d6d6;'></div>
<div class=a style='left:960px;top:300px;width:280px;height:1px;background:#d6d6d6;'></div>
<div class=a style='left:960px;top:391px;width:280px;height:1px;background:#d6d6d6;'></div>
<div class=a style='left:960px;top:438px;width:280px;height:1px;background:#d6d6d6;'></div>
<div class=a style='left:960px;top:576px;width:280px;height:1px;background:#d6d6d6;'></div>
<div class=a style='left:960px;top:667px;width:280px;height:1px;background:#d6d6d6;'></div>
<svg class=a style='left:0;top:0' width=1920 height=807><polyline points='1222,315.0 1229.5,322.5 1222,330.0' fill='none' stroke='#333' stroke-width='1.5'/><polyline points='1222,359.0 1229.5,366.5 1222,374.0' fill='none' stroke='#333' stroke-width='1.5'/><polyline points='1222,453.0 1229.5,460.5 1222,468.0' fill='none' stroke='#333' stroke-width='1.5'/><polyline points='1222,591.0 1229.5,598.5 1222,606.0' fill='none' stroke='#333' stroke-width='1.5'/><path d='M937.5 193.5 L931 193.5 L931 174 L940.5 174 L942 175.5' fill='none' stroke='#333' stroke-width='1.5'/><path d='M939.8 178.5 L947 178.5 L953 184.5 L953 196 L939.8 196 Z' fill='#fafafa' stroke='#333' stroke-width='1.5'/><path d='M947 178.5 L947 184.5 L953 184.5' fill='none' stroke='#333' stroke-width='1.3'/><line x1='943.5' y1='188.8' x2='950' y2='188.8' stroke='#555' stroke-width='1.2'/><line x1='943.5' y1='191.7' x2='950' y2='191.7' stroke='#555' stroke-width='1.2'/><rect x='934' y='218.2' width='16.2' height='21.8' fill='#fafafa' stroke='#333' stroke-width='1.6'/><rect x='938' y='225.8' width='3.4' height='3.4' fill='none' stroke='#666' stroke-width='1.1'/><rect x='938' y='232.3' width='3.4' height='3.4' fill='none' stroke='#666' stroke-width='1.1'/><line x1='943.5' y1='227.5' x2='947' y2='227.5' stroke='#666' stroke-width='1.1'/><line x1='943.5' y1='234' x2='947' y2='234' stroke='#666' stroke-width='1.1'/><path d='M938.2 287 L933.9 287 L933.9 265 L943.5 265 L950 271.5 L950 273' fill='none' stroke='#333' stroke-width='1.5'/><path d='M942.6 265 L942.6 272.2 L950 272.2' fill='none' stroke='#333' stroke-width='1.3'/><path d='M941.5 280 A6 6 0 0 1 952.5 278.5 M952.8 274.5 L952.8 279.5 L948 279.5' fill='none' stroke='#2ea043' stroke-width='1.6'/><path d='M953 282.5 A6 6 0 0 1 942 284 M941.6 288 L941.6 283 L946.5 283' fill='none' stroke='#2ea043' stroke-width='1.6'/><polyline points='930.5,415 937,421.5 953,406' fill='none' stroke='#2e9e46' stroke-width='2.6'/><rect x='930.8' y='502.7' width='9' height='9.2' fill='#fff' stroke='#333' stroke-width='1.5'/><path d='M935.3 504.5 L935.3 510 M932.6 507.3 L938 507.3' stroke='#1f7fd4' stroke-width='1.6'/><path d='M941.5 498 L937.2 498 L937.2 500 M937.2 514 L937.2 516 L941.5 516' fill='none' stroke='#666' stroke-width='1.5'/><rect x='944.5' y='498.5' width='9' height='17.8' fill='#fff' stroke='#333' stroke-width='1.5'/><line x1='944.5' y1='504.5' x2='953.5' y2='504.5' stroke='#444' stroke-width='1.3'/><line x1='944.5' y1='510.5' x2='953.5' y2='510.5' stroke='#444' stroke-width='1.3'/><rect x='930.8' y='546.8' width='9.5' height='9.8' fill='#fff' stroke='#e8383f' stroke-width='1.5'/><line x1='931' y1='556.5' x2='940' y2='547' stroke='#e8383f' stroke-width='1.4'/><path d='M941.5 542 L937.2 542 L937.2 544 M937.2 558 L937.2 560 L941.5 560' fill='none' stroke='#666' stroke-width='1.5'/><rect x='944.5' y='542.5' width='9' height='17.8' fill='#fff' stroke='#333' stroke-width='1.5'/><line x1='944.5' y1='548.5' x2='953.5' y2='548.5' stroke='#444' stroke-width='1.3'/><line x1='944.5' y1='554.5' x2='953.5' y2='554.5' stroke='#444' stroke-width='1.3'/><path d='M933.5 634.5 L951 652 M951 634.5 L933.5 652' stroke='#e8383f' stroke-width='1.6'/><path d='M941 701 L930.9 701 L930.9 678.9 L953.2 678.9 L953.2 688' fill='#fafafa' stroke='#333' stroke-width='1.5'/><rect x='933.6' y='681.6' width='3.6' height='3.6' fill='#fff' stroke='#555' stroke-width='1.3'/><rect x='939.6' y='681.6' width='11.5' height='3.6' fill='#eee' stroke='#555' stroke-width='1.3'/><rect x='933.6' y='687.6' width='3.6' height='11.5' fill='#eee' stroke='#555' stroke-width='1.3'/><polygon points='951.18,692.80 952.07,693.98 954.11,694.00 954.11,696.20 952.07,696.22 951.18,697.40 950.61,698.76 951.61,700.54 949.71,701.64 948.66,699.88 947.20,699.70 945.74,699.88 944.69,701.64 942.79,700.54 943.79,698.76 943.22,697.40 942.33,696.22 940.29,696.20 940.29,694.00 942.33,693.98 943.22,692.80 943.79,691.44 942.79,689.66 944.69,688.56 945.74,690.32 947.20,690.50 948.66,690.32 949.71,688.56 951.61,689.66 950.61,691.44' fill='#fff' stroke='#1f7fd4' stroke-width='1.5' stroke-linejoin='round'/><circle cx='947.2' cy='695.1' r='2.4' fill='#1f7fd4'/><rect x='934' y='766.8' width='15' height='22.2' fill='#fafafa' stroke='#333' stroke-width='1.5'/><line x1='937' y1='771.5' x2='938.5' y2='771.5' stroke='#555' stroke-width='1.2'/><line x1='940' y1='771.5' x2='946' y2='771.5' stroke='#555' stroke-width='1.2'/><line x1='937' y1='775.5' x2='938.5' y2='775.5' stroke='#555' stroke-width='1.2'/><line x1='940' y1='775.5' x2='946' y2='775.5' stroke='#555' stroke-width='1.2'/><line x1='934' y1='779.5' x2='949' y2='779.5' stroke='#333' stroke-width='1.4'/><line x1='934' y1='784.3' x2='949' y2='784.3' stroke='#333' stroke-width='1.3'/><line x1='941.5' y1='779.5' x2='941.5' y2='789' stroke='#333' stroke-width='1.3'/></svg>
</body></html>
